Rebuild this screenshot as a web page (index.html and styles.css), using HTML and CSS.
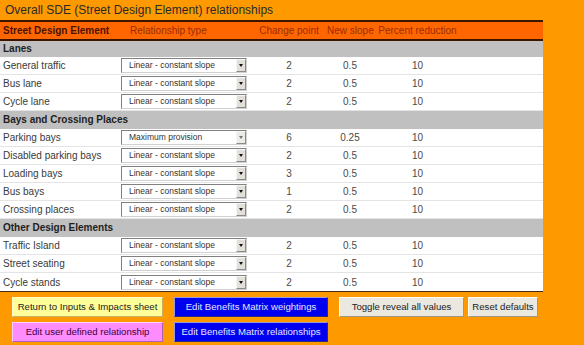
FILE: index.html
```html
<!DOCTYPE html>
<html lang="en">
<head>
  <meta charset="UTF-8">
  <title>SDE relationships</title>
  <link rel="stylesheet" href="styles.css">
</head>
<body>
<div class="title">Overall SDE (Street Design Element) relationships</div>

<div class="sheet">
  <div class="row head">
    <div class="name">Street Design Element</div>
    <div class="type">Relationship type</div>
    <div class="num">Change point</div>
    <div class="num">New slope</div>
    <div class="num">Percent reduction</div>
  </div>

  <div class="section first">Lanes</div>
  <div class="row">
    <div class="name">General traffic</div>
    <div class="type"><div class="select">Linear - constant slope<i></i></div></div>
    <div class="num">2</div><div class="num">0.5</div><div class="num">10</div>
  </div>
  <div class="row">
    <div class="name">Bus lane</div>
    <div class="type"><div class="select">Linear - constant slope<i></i></div></div>
    <div class="num">2</div><div class="num">0.5</div><div class="num">10</div>
  </div>
  <div class="row">
    <div class="name">Cycle lane</div>
    <div class="type"><div class="select">Linear - constant slope<i></i></div></div>
    <div class="num">2</div><div class="num">0.5</div><div class="num">10</div>
  </div>

  <div class="section">Bays and Crossing Places</div>
  <div class="row">
    <div class="name">Parking bays</div>
    <div class="type"><div class="select off">Maximum provision<i></i></div></div>
    <div class="num">6</div><div class="num">0.25</div><div class="num">10</div>
  </div>
  <div class="row">
    <div class="name">Disabled parking bays</div>
    <div class="type"><div class="select">Linear - constant slope<i></i></div></div>
    <div class="num">2</div><div class="num">0.5</div><div class="num">10</div>
  </div>
  <div class="row">
    <div class="name">Loading bays</div>
    <div class="type"><div class="select">Linear - constant slope<i></i></div></div>
    <div class="num">3</div><div class="num">0.5</div><div class="num">10</div>
  </div>
  <div class="row">
    <div class="name">Bus bays</div>
    <div class="type"><div class="select">Linear - constant slope<i></i></div></div>
    <div class="num">1</div><div class="num">0.5</div><div class="num">10</div>
  </div>
  <div class="row">
    <div class="name">Crossing places</div>
    <div class="type"><div class="select">Linear - constant slope<i></i></div></div>
    <div class="num">2</div><div class="num">0.5</div><div class="num">10</div>
  </div>

  <div class="section">Other Design Elements</div>
  <div class="row">
    <div class="name">Traffic Island</div>
    <div class="type"><div class="select">Linear - constant slope<i></i></div></div>
    <div class="num">2</div><div class="num">0.5</div><div class="num">10</div>
  </div>
  <div class="row">
    <div class="name">Street seating</div>
    <div class="type"><div class="select">Linear - constant slope<i></i></div></div>
    <div class="num">2</div><div class="num">0.5</div><div class="num">10</div>
  </div>
  <div class="row last">
    <div class="name">Cycle stands</div>
    <div class="type"><div class="select">Linear - constant slope<i></i></div></div>
    <div class="num">2</div><div class="num">0.5</div><div class="num">10</div>
  </div>
</div>

<div class="buttons">
  <div class="btn yellow">Return to Inputs &amp; Impacts sheet</div>
  <div class="btn blue">Edit Benefits Matrix weightings</div>
  <div class="btn grey">Toggle reveal all values</div>
  <div class="btn grey reset">Reset defaults</div>
  <div class="btn pink">Edit user defined relationship</div>
  <div class="btn blue">Edit Benefits Matrix relationships</div>
</div>
</body>
</html>
```

FILE: styles.css
```css
body {
  margin: 0;
  background-color: #ff9900;
  font-family: "Liberation Sans", Arial, sans-serif;
  color: #333;
}

.title {
  height: 20px;
  line-height: 20px;
  padding-left: 5px;
  font-size: 12px;
  color: #2a2a2a;
}

.sheet {
  width: 543px;
  background-color: #fff;
  border-bottom: 1px solid #4a2a10;
}

.row {
  display: grid;
  grid-template-columns: 118px 133px 76px 46px 89px 1fr;
  height: 18px;
  box-sizing: border-box;
  border-bottom: 1px solid #e4e4e4;
  font-size: 10px;
  align-items: center;
}

.row.last {
  border-bottom: none;
}

.row > .name {
  padding-left: 3px;
  white-space: nowrap;
  color: #3a3a3a;
}

.row > .num {
  text-align: center;
  color: #4a4a4a;
}

.row.head {
  height: 21px;
  background-color: #ff6600;
  border-top: 2px solid #3d1400;
  border-bottom: 2px solid #3d1400;
  color: #9a2c00;
}

.row.head > .name {
  font-weight: bold;
  color: #4a1200;
}

.row.head > .type {
  padding-left: 12px;
}

.row.head > .num {
  color: #9a2c00;
  white-space: nowrap;
}

.section {
  height: 18px;
  line-height: 18px;
  padding-left: 3px;
  background-color: #c0c0c0;
  font-size: 10px;
  font-weight: bold;
  color: #1e1e1e;
}

.section.first {
  height: 16px;
  line-height: 16px;
}

.select {
  position: relative;
  margin-left: 3px;
  width: 126px;
  height: 15px;
  box-sizing: border-box;
  border: 1px solid #d0d0d0;
  border-top-color: #808080;
  border-left-color: #808080;
  padding-left: 7px;
  font-size: 8.5px;
  line-height: 13px;
  color: #333;
  white-space: nowrap;
}

.select > i {
  position: absolute;
  right: 0;
  top: 0;
  width: 10px;
  height: 13px;
  box-sizing: border-box;
  background-color: #e2e0d8;
  border: 1px solid #f6f6f6;
  border-right-color: #8a8a8a;
  border-bottom-color: #8a8a8a;
}

.select > i::after {
  content: '';
  position: absolute;
  left: 2px;
  top: 4px;
  border-left: 2px solid transparent;
  border-right: 2px solid transparent;
  border-top: 3px solid #111;
}

.select.off > i {
  background-color: #ecebe6;
}

.select.off > i::after {
  border-top-color: #777;
}

.buttons {
  display: grid;
  grid-template-columns: 151px 154px 125px 70px;
  grid-auto-rows: 20px;
  column-gap: 11px;
  row-gap: 5px;
  margin-top: 5px;
  padding-left: 12px;
}

.buttons > .reset {
  width: 70px;
  margin-left: -7px;
}

.btn {
  box-sizing: border-box;
  height: 20px;
  line-height: 18px;
  text-align: center;
  font-size: 9.6px;
  white-space: nowrap;
  border: 1px solid;
}

.btn.yellow {
  background-color: #ffff99;
  border-color: #fffccc #c8b060 #c8b060 #fffccc;
  color: #222;
}

.btn.blue {
  background-color: #0000f0;
  border-color: #9a9ad8 #2a2a80 #2a2a80 #9a9ad8;
  color: #e6e6ff;
}

.btn.pink {
  background-color: #ff8cff;
  border-color: #ffd0ff #b060b0 #b060b0 #ffd0ff;
  color: #3a003a;
}

.btn.grey {
  background-color: #ebe8e0;
  border-color: #fffdf4 #a09880 #a09880 #fffdf4;
  color: #222;
}
```
